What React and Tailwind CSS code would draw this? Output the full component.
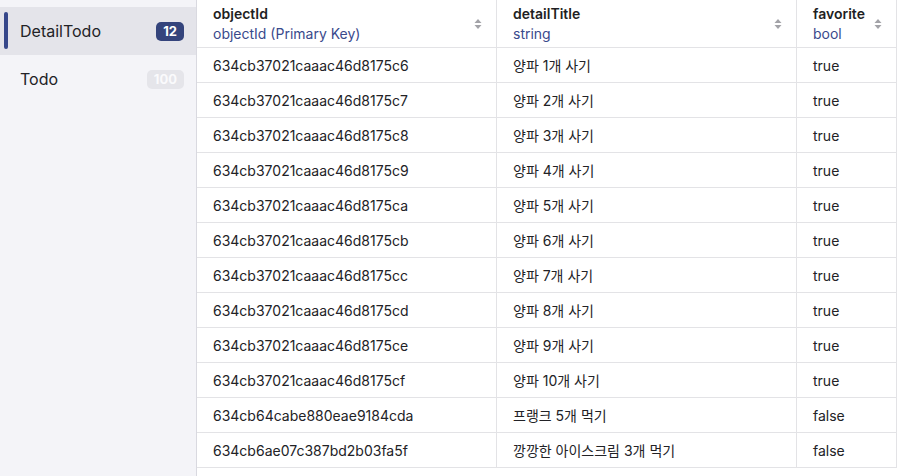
import React from 'react';

const rows = [
  ['634cb37021caaac46d8175c6', '양파 1개 사기', 'true'],
  ['634cb37021caaac46d8175c7', '양파 2개 사기', 'true'],
  ['634cb37021caaac46d8175c8', '양파 3개 사기', 'true'],
  ['634cb37021caaac46d8175c9', '양파 4개 사기', 'true'],
  ['634cb37021caaac46d8175ca', '양파 5개 사기', 'true'],
  ['634cb37021caaac46d8175cb', '양파 6개 사기', 'true'],
  ['634cb37021caaac46d8175cc', '양파 7개 사기', 'true'],
  ['634cb37021caaac46d8175cd', '양파 8개 사기', 'true'],
  ['634cb37021caaac46d8175ce', '양파 9개 사기', 'true'],
  ['634cb37021caaac46d8175cf', '양파 10개 사기', 'true'],
  ['634cb64cabe880eae9184cda', '프랭크 5개 먹기', 'false'],
  ['634cb6ae07c387bd2b03fa5f', '깡깡한 아이스크림 3개 먹기', 'false'],
];

const SortIcon = () => (
  <svg width="8" height="12" viewBox="0 0 8 12" className="shrink-0">
    <path d="M4 1 L7.5 5 H0.5 Z" fill="#a3a3a8" />
    <path d="M4 11 L7.5 7 H0.5 Z" fill="#a3a3a8" />
  </svg>
);

const HeaderCell = ({ title, type, width, last }) => (
  <div className={`${width} h-[47px] flex items-center justify-between pl-4 pr-[14px] border-r border-[#e3e3e6] shrink-0`}>
    <div className="flex flex-col leading-[20px]">
      <span className="text-[14px] font-semibold text-[#1f1f23]">{title}</span>
      <span className="text-[14px] text-[#3a4a8c]">{type}</span>
    </div>
    <SortIcon />
  </div>
);

const SideItem = ({ label, count, active }) => (
  <div className={`relative h-12 flex items-center justify-between pl-5 pr-3 ${active ? 'bg-[#e4e4ea]' : ''}`}>
    {active && <div className="absolute left-1 top-[5px] w-1 h-[37px] rounded-full bg-[#36478a]" />}
    <span className="text-[16px] text-[#222226]">{label}</span>
    <span
      className={`h-[19px] px-[7px] rounded-[5px] text-[13px] font-bold leading-[19px] ${
        active ? 'bg-[#34447c] text-white' : 'bg-[#e5e5ea] text-[#fafafc]'
      }`}
    >
      {count}
    </span>
  </div>
);

export default function App() {
  return (
    <div
      className="w-[908px] h-[476px] flex bg-white overflow-hidden"
      style={{ fontFamily: 'Inter, "Noto Sans CJK KR", sans-serif' }}
    >
      <aside className="w-[197px] h-full bg-[#f4f4f8] border-r border-[#d9d9e0] pt-[7px] shrink-0">
        <SideItem label="DetailTodo" count="12" active />
        <SideItem label="Todo" count="100" />
      </aside>
      <div className="flex flex-col">
        <div className="flex border-b border-[#e3e3e6]">
          <HeaderCell title="objectId" type="objectId (Primary Key)" width="w-[300px]" />
          <HeaderCell title="detailTitle" type="string" width="w-[300px]" />
          <HeaderCell title="favorite" type="bool" width="w-[100px]" />
        </div>
        {rows.map((r) => (
          <div key={r[0]} className="flex h-[35px] border-b border-[#e3e3e6] text-[14px] text-[#222226]">
            <div className="w-[300px] pl-4 flex items-center border-r border-[#e3e3e6]">{r[0]}</div>
            <div className="w-[300px] pl-4 flex items-center border-r border-[#e3e3e6]">{r[1]}</div>
            <div className="w-[100px] pl-4 flex items-center border-r border-[#e3e3e6]">{r[2]}</div>
          </div>
        ))}
      </div>
    </div>
  );
}
